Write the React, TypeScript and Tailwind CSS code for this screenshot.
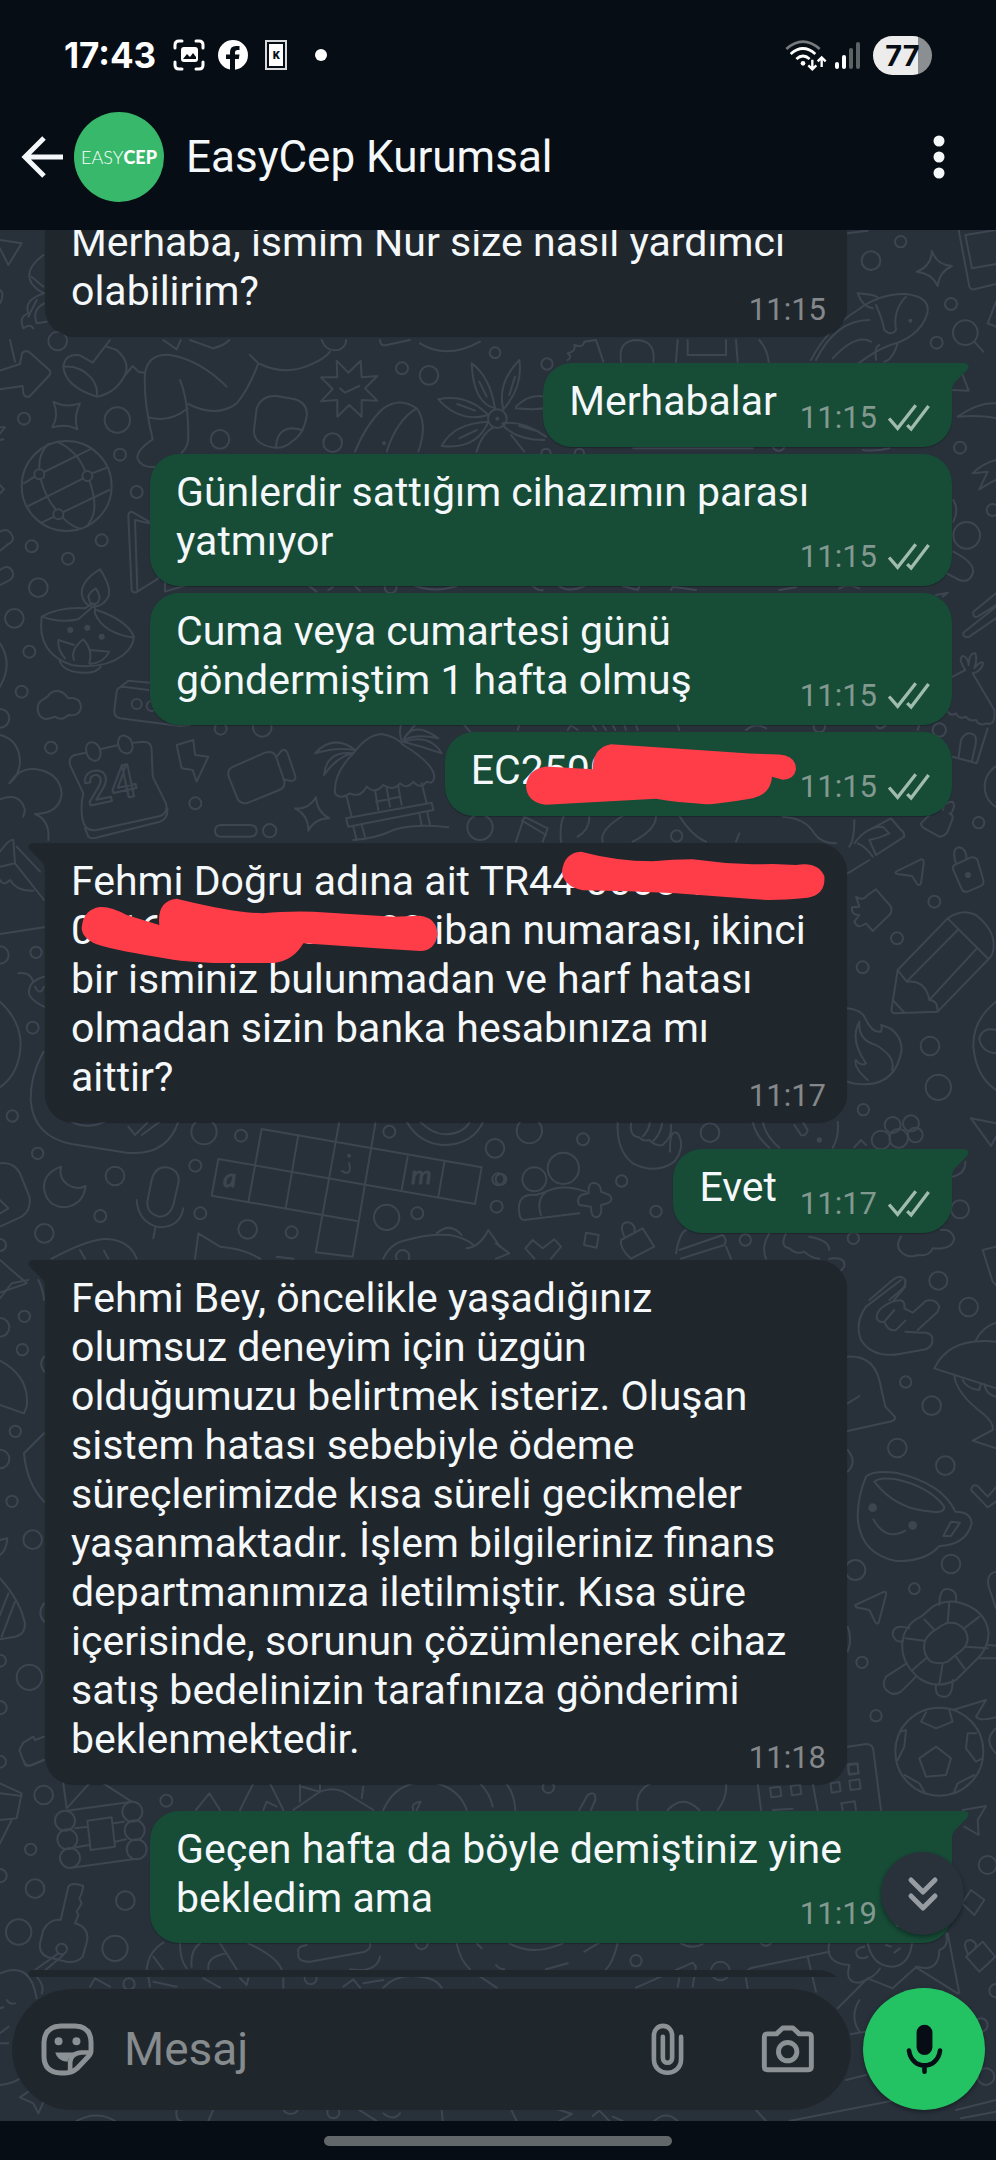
import { useState } from "react";
import type { ReactNode } from "react";
import clsx from "clsx";

interface Doodle {
  x: number;
  y: number;
  circles: number[][];
  dots?: number[][];
  paths: string[];
}

interface Message {
  id: number;
  own?: boolean;
  tail?: boolean;
  text: string;
  time: string;
  spacing?: string;
  overlay?: ReactNode;
}

// Each tile is drawn at three times its final size, x / y is where it lands on the wallpaper
const DOODLES: Doodle[] = [
  {
    x: 0,
    y: 0,
    circles: [[173, 1023, 28]],
    paths: [
      "M0 720 L65 730 L25 795 L0 745",
      "M130 765 Q70 810 95 850 Q110 870 132 880 M95 830 L130 860",
      "M132 880 Q70 900 85 940 Q55 950 70 985 Q90 970 100 985 M110 900 L85 950 M132 910 Q95 930 110 970 L140 965",
      "M0 870 Q15 880 0 910",
    ],
  },
  {
    x: 496,
    y: 0,
    circles: [[1214, 725, 17], [1125, 782, 28], [1365, 912, 18], [1322, 1028, 18], [1408, 998, 37]],
    dots: [[1243, 962, 6]],
    paths: [
      "M945 1080 Q990 990 1085 930 Q1150 880 1230 882 Q1300 890 1295 935 Q1280 1000 1200 1030 Q1120 1050 1010 1160 M1085 880 Q1100 920 1130 925 M1085 880 Q1150 885 1145 895 M1140 915 Q1160 960 1165 990 Q1185 1010 1200 990 Q1190 930 1230 890 M960 1080 Q1020 960 1120 960 M1010 1075 Q1080 1000 1125 1025 M1140 1080 Q1135 1040 1150 1035 M1205 1030 Q1190 1080 1165 1085",
      "M1308 753 Q1322 795 1368 798 Q1330 815 1325 858 Q1308 820 1262 815 Q1305 800 1308 753Z",
      "M1435 1025 L1462 1055 M1388 690 L1420 860 Q1425 870 1435 868 L1500 852 M1500 690 L1408 705 L1428 805 L1500 792",
      "M1500 905 L1475 970 L1500 980 M1055 700 L1115 692",
    ],
  },
  {
    x: 0,
    y: 340,
    circles: [
      [72, 236, 18], [352, 240, 38], [660, 298, 28], [360, 344, 18], [410, 456, 18], [95, 619, 18],
      [305, 601, 18], [204, 656, 18], [115, 743, 28], [43, 835, 28], [88, 935, 18], [65, 1055, 18],
      [0, 1135, 28], [153, 1223, 18], [998, 308, 28], [1206, 85, 18], [1287, 106, 28], [1485, 38, 16],
      [662, 1166, 18], [787, 1162, 28], [586, 1390, 18], [809, 1472, 20], [1440, 1462, 38], [1172, 742, 18],
      [200, 438, 135], [118, 403, 15], [262, 408, 15], [175, 523, 15], [1492, 236, 28], [410, 1092, 15], [455, 1098, 15],
    ],
    dots: [[211, 870, 9], [262, 863, 9], [305, 890, 9], [1152, 310, 6], [1492, 236, 6]],
    paths: [
      "M30 0 L45 65 M0 92 L60 72 L66 40 Q75 28 90 38 L148 90 Q155 98 146 108 L90 168 Q75 175 70 160 L68 138 L0 148",
      "M190 80 Q195 40 240 46 L278 68 L330 0 M190 80 Q195 140 290 170 Q345 160 372 110 Q395 70 350 30 L320 20 M190 80 Q240 75 275 115 Q295 140 290 170 M372 110 L398 78 L415 95 L432 98",
      "M458 298 Q430 180 435 100 Q445 40 510 45 Q600 60 680 140 M540 120 Q565 180 565 290 Q565 320 545 338 M445 232 Q510 250 563 205 M458 298 Q410 330 412 355 Q425 385 465 380 M565 192 Q650 235 710 190 Q745 150 775 70 L750 45 M780 72 Q860 110 940 70 Q975 55 990 35",
      "M490 0 L530 28 L542 0 M570 0 L640 25 Q675 15 688 0 M965 0 Q980 40 1020 28 Q1040 15 1038 0 M1140 0 Q1140 20 1160 15 L1230 0 M1260 10 Q1340 60 1440 5",
      "M160 185 Q195 205 240 190 Q220 230 232 268 Q200 250 157 262 Q178 225 160 185Z",
      "M0 262 L15 262 L0 280 M0 300 L10 298 M0 435 L12 448 L0 460",
      "M72 430 L104 410 M132 396 L270 328 M85 498 L250 415 M276 400 L318 384 M125 548 L162 530 M190 516 L328 450 M145 312 Q115 340 118 388 M122 418 Q140 480 168 509 M188 533 Q215 560 240 566 M170 305 Q230 330 256 394 M268 422 Q300 510 265 552",
      "M447 545 L395 515 Q385 515 385 530 L395 750 Q400 762 412 755 L475 715 M447 550 L405 540 L412 750 M495 720 L495 755 L560 735",
      "M0 575 Q25 560 38 590 Q42 605 25 612 L0 632 M0 690 Q25 670 38 695 Q45 715 20 725 L0 735 M0 910 Q40 970 0 1040",
      "M125 830 Q180 800 255 805 L278 790 M125 830 Q180 850 235 838 L278 800 M125 830 Q110 940 215 975 Q310 990 370 945 Q400 920 402 890 Q380 840 290 810 M402 893 Q310 880 285 820 L285 795 M245 760 Q245 720 300 688 Q335 740 325 770 Q310 800 278 800 Q250 795 245 760 M265 770 Q270 755 287 745 Q305 770 295 785 Q285 798 270 788Z",
      "M178 960 Q190 1000 260 998 Q290 998 302 980 M195 955 Q172 930 175 900 L222 915 M222 960 Q210 930 250 898 Q280 930 268 970 M270 930 L328 935 Q310 970 270 972",
      "M130 1078 Q145 1070 150 1060 Q180 1040 205 1075 Q240 1070 243 1100 Q240 1130 205 1125 Q185 1145 165 1130 Q120 1150 113 1110 Q112 1085 130 1078Z",
      "M445 1050 L370 1040 Q352 1040 350 1055 L343 1110 Q342 1132 360 1135 L540 1158 L570 1155 M352 1048 L385 1022 L450 1028",
      "M0 1185 Q60 1200 60 1270 Q55 1310 28 1330 Q60 1280 110 1288 Q180 1300 185 1360 Q180 1420 105 1422 Q150 1440 145 1500 M0 1378 Q60 1355 75 1410 L70 1430",
      "M250 1360 L210 1275 Q205 1250 225 1245 L258 1238 M300 1228 L352 1216 M400 1208 L430 1205 Q455 1205 455 1230 L458 1310 L498 1390 Q505 1420 480 1428 L290 1470 Q255 1475 248 1440 Q240 1400 250 1360 M255 1465 L265 1490 Q275 1500 300 1490 L480 1445 Q505 1435 502 1405",
      "M258 1230 Q258 1205 278 1207 Q300 1212 302 1240 Q300 1264 282 1262 Q262 1258 258 1230Z M354 1210 Q354 1185 374 1187 Q396 1192 398 1220 Q396 1242 378 1240 Q358 1238 354 1210Z",
      "M530 1215 L580 1200 L585 1245 L625 1250 L590 1325 L578 1290 L545 1285Z",
      "M700 1280 L795 1238 Q820 1230 828 1250 L852 1320 Q858 1342 838 1350 L745 1388 Q718 1395 710 1370 L686 1310 Q680 1288 700 1280Z M830 1250 L845 1232 Q855 1225 862 1238 L886 1308 Q888 1325 870 1322 L850 1318",
      "M1005 1360 Q1000 1300 1060 1240 Q1100 1185 1145 1182 Q1190 1190 1210 1215 Q1300 1270 1303 1310 Q1300 1335 1280 1325 Q1260 1350 1240 1325 Q1220 1350 1200 1330 Q1180 1355 1150 1335 Q1125 1365 1100 1340 Q1080 1375 1050 1360 Q1020 1380 1005 1360 M1040 1370 L1055 1430 M1125 1350 L1135 1410 M1160 1345 L1170 1400 M1195 1340 L1205 1395 M1265 1330 L1280 1390 M1128 1385 L1200 1370 M1038 1435 L1295 1388 L1300 1410 L1045 1460Z M1060 1460 L1070 1500 M1085 1455 L1095 1490 M1258 1420 L1265 1455 M1282 1418 L1290 1455 M1060 1500 Q1130 1495 1180 1470 Q1250 1450 1345 1462",
      "M1065 1230 Q1000 1180 945 1240 Q1010 1220 1065 1230 M1060 1240 Q980 1230 972 1305 Q1010 1250 1060 1240 M1205 1205 Q1195 1170 1205 1150 M1210 1200 Q1240 1140 1315 1195 Q1250 1180 1210 1200 M1210 1205 Q1290 1180 1325 1240 Q1270 1220 1210 1205 M1215 1190 L1245 1155 M1390 1152 L1410 1175",
      "M885 1405 Q925 1410 948 1372 Q950 1415 988 1435 Q945 1435 925 1472 Q925 1425 885 1405Z",
      "M662 1455 H752 Q770 1457 770 1472 Q770 1488 752 1490 H662 Q645 1488 645 1472 Q645 1457 662 1455Z",
      "M1010 62 L1045 98 L1082 62 L1085 112 L1132 108 L1095 145 L1132 182 L1085 180 L1085 230 L1048 195 L1012 230 L1012 180 L963 184 L998 147 L963 112 L1012 112Z M1020 145 L1035 158 L1078 138",
      "M770 205 Q785 165 830 168 L885 178 Q925 190 920 230 Q910 285 875 305 Q850 328 815 322 Q760 310 762 270Z M828 322 Q830 265 880 265 Q900 268 908 272",
      "M1065 335 Q1100 250 1150 205 Q1200 170 1250 205 Q1285 250 1255 335 M1160 335 Q1190 240 1250 205",
      "M1415 70 Q1470 110 1485 205 Q1420 190 1415 70Z M1438 125 L1460 170 M1315 178 Q1400 160 1465 225 Q1380 250 1315 178Z M1372 192 L1425 212 M1325 318 Q1360 250 1465 245 Q1430 330 1325 318Z M1378 295 L1430 270 M1430 335 Q1445 280 1480 262 M1558 60 Q1570 140 1510 208 Q1490 130 1558 60Z M1545 110 L1528 165",
      "M930 740 L950 755 M985 750 L998 742 M1065 738 L1080 752 M1240 735 Q1300 760 1370 738",
    ],
  },
  {
    x: 496,
    y: 340,
    circles: [
      [153, 72, 17], [1392, 323, 18], [1490, 510, 18], [1412, 586, 40], [1330, 1170, 20], [848, 315, 18],
      [150, 340, 14], [250, 340, 14], [970, 1160, 17], [1538, 1340, 72],
    ],
    paths: [
      "M215 60 Q230 50 215 40 Q240 35 235 15 Q260 25 265 5 L300 0 L322 65 M375 65 Q365 0 425 0 Q480 5 472 65 M540 65 L545 0 M720 0 L725 65 M575 0 L575 45 L690 45 L690 0 M790 0 Q815 30 818 65",
      "M60 200 Q100 160 145 170 M60 205 Q110 210 145 205 M20 250 Q80 240 150 290 M70 258 L120 272 M20 255 Q60 300 145 300 M45 285 L85 335",
      "M412 325 L770 325 M1100 330 Q1140 335 1180 325",
      "M1367 150 L1418 152 L1400 105 M1385 230 Q1450 185 1500 190 M1385 230 Q1460 225 1500 235",
      "M1430 400 Q1460 370 1500 360 M1430 400 L1475 395 L1450 448 Q1480 430 1500 420",
      "M1372 480 Q1390 510 1372 545 M1372 635 Q1440 670 1430 700 Q1420 730 1390 720 L1352 700",
      "M110 738 Q130 755 140 750 M185 735 Q215 760 265 738 M380 738 L425 750 L432 735 M525 750 L530 740 L600 750 M850 750 L900 742 M1030 745 Q1055 730 1090 745 M1340 770 L1355 758 L1320 765",
      "M1500 760 L1432 815 Q1430 835 1445 830 L1500 795 M1500 800 L1402 878 Q1400 895 1420 890 L1500 835",
      "M1370 1010 L1408 990 Q1385 955 1400 948 Q1415 950 1418 975 Q1420 935 1438 940 Q1445 960 1435 985 Q1455 960 1462 970 Q1455 995 1430 1000 L1495 1110 Q1500 1160 1470 1150 Q1450 1160 1440 1140 Q1420 1145 1410 1130 Q1390 1140 1380 1120 Q1365 1130 1355 1115",
      "M65 1170 L70 1155 M215 1170 L225 1155 L245 1170 M290 1155 L300 1170 M320 1155 L330 1170 M350 1155 L358 1170 M385 1155 L390 1170 M420 1155 L425 1170 M545 1155 L550 1170 M750 1170 Q780 1145 810 1165 M1140 1155 Q1150 1175 1170 1155 M1265 1170 L1270 1155",
      "M1475 1165 L1442 1270 L1370 1250 M1388 1250 L1395 1200 Q1410 1170 1435 1185 Q1445 1195 1435 1230 L1428 1262",
    ],
  },
  {
    x: 0,
    y: 800,
    circles: [
      [108, 457, 17], [0, 465, 26], [98, 683, 18], [37, 948, 17], [723, 1007, 18], [612, 995, 38], [113, 1060, 17],
      [586, 1097, 18], [345, 1128, 28], [301, 1248, 18], [601, 1240, 18], [133, 1300, 28], [743, 1288, 28],
      [875, 1297, 18], [0, 1335, 18], [1168, 995, 18], [1485, 1045, 28], [1160, 1252, 38], [1252, 1240, 18],
      [1208, 1370, 20], [1495, 1138, 18], [1490, 1220, 18],
    ],
    dots: [[1047, 1067, 6]],
    paths: [
      "M0 155 Q30 115 40 120 L45 190 L0 200 M45 190 L132 300 M50 140 L120 215 M0 240 Q10 260 30 240 Q50 275 100 272 M0 402 L132 382",
      "M55 520 Q90 515 100 545 M132 530 Q80 545 88 585 Q100 605 132 620 M105 560 Q120 590 132 560 M0 605 Q60 660 62 730 Q60 820 0 862",
      "M130 755 Q90 830 92 900 Q100 1010 215 1032 L380 1058 Q500 1070 535 965 M215 965 Q260 990 315 965 M385 980 L405 1005 L445 965 M425 1005 L480 965",
      "M183 1100 Q130 1120 132 1165 Q140 1220 195 1222 Q250 1215 257 1158 Q230 1172 205 1155 Q175 1135 183 1100Z",
      "M455 1140 Q465 1100 498 1102 Q538 1108 536 1145 L520 1215 Q508 1250 478 1250 Q440 1240 442 1205Z M410 1200 Q415 1270 480 1282 Q540 1280 550 1225 M466 1283 L460 1315",
      "M785 987 L1445 1102 M655 1077 L1425 1212 M635 1187 L1070 1263 M655 1077 L635 1187 M785 987 L745 1207 M895 1005 L857 1225 M1018 965 L947 1357 M1127 965 L1058 1370 M1223 1070 L1205 1170 M1333 1087 L1315 1190 M1445 1102 L1425 1212 M947 1357 L1058 1370",
      "M585 1376 L595 1300 L660 1340 Q730 1345 780 1376 M830 1370 L880 1376 M155 1376 Q280 1310 330 1318 Q390 1325 410 1376 M240 1350 L255 1376 M312 1352 L325 1376",
      "M0 1090 Q40 1085 60 1120 L88 1190 Q95 1230 65 1250 L0 1280 M0 1200 L25 1225 L0 1240 M0 1380 L80 1450 L0 1478",
      "M1400 1345 Q1440 1340 1465 1290 L1500 1340 M1150 1376 Q1170 1330 1220 1320 Q1290 1300 1350 1305 Q1400 1315 1420 1335 M1310 1300 Q1350 1265 1385 1305 M1220 965 Q1260 1035 1340 1035 Q1420 1030 1450 965 M1260 965 Q1300 1005 1340 1003 Q1390 1000 1410 965",
    ],
  },
  {
    x: 496,
    y: 800,
    circles: [
      [1448, 68, 17], [1315, 305, 18], [1203, 415, 18], [1100, 502, 18], [1302, 738, 28], [1327, 862, 38],
      [1102, 929, 17], [1392, 1228, 27], [1327, 1442, 27], [642, 998, 28], [261, 1018, 18], [100, 992, 38],
      [15, 1138, 16], [377, 1143, 17], [480, 1234, 17], [748, 1320, 17], [1072, 1315, 17], [542, 108, 17],
      [115, 1138, 36], [202, 1105, 47], [1190, 975, 24], [1245, 970, 24], [1155, 1020, 28], [1208, 1015, 28], [1258, 1005, 22],
    ],
    dots: [[1416, 225, 9], [970, 1020, 8]],
    paths: [
      "M60 125 L85 50 L155 85 L140 125 M78 62 L150 105 M195 125 Q190 70 205 45 M245 110 Q280 90 280 50 M320 125 Q310 90 380 48 M410 125 Q480 90 480 48 M550 48 Q590 110 630 125 M730 100 L720 125 M860 50 Q930 55 955 100 Q975 130 1020 130",
      "M1300 45 L1275 70 Q1275 80 1285 85 L1330 110 Q1345 110 1355 95 L1370 55 Q1372 45 1360 40 M1340 30 Q1345 5 1370 5 Q1380 20 1365 40",
      "M1055 220 L1120 180 M1060 140 Q1075 120 1075 60 M1075 130 Q1110 80 1160 80 L1180 100 Q1150 115 1120 120 L1140 165 L1225 110 Q1225 95 1215 90 L1185 55 L1120 90 M1085 130 Q1110 140 1130 170",
      "M1200 215 L1275 178 Q1285 178 1283 190 L1275 250 Q1270 260 1262 250 L1248 228 L1205 222 Q1195 220 1200 215Z",
      "M1375 195 L1425 172 Q1440 170 1445 182 L1462 240 Q1465 255 1450 260 L1415 275 Q1400 278 1395 262 L1372 210 Q1368 200 1375 195Z M1380 190 Q1365 145 1390 142 Q1410 145 1412 175",
      "M1080 290 Q1100 305 1115 285 L1140 268 L1185 320 Q1190 335 1180 345 L1130 393 L1110 370 Q1085 390 1075 365 L1090 345 Q1065 345 1068 322 L1090 320Z",
      "M1205 510 L1355 355 Q1400 325 1440 345 Q1490 385 1493 430 Q1495 460 1480 475 L1325 635 L1195 640 Q1185 640 1187 625Z M1355 355 L1475 475 M1385 390 L1232 545 M1440 448 L1300 600 M1205 510 L1232 545 Q1290 540 1300 600 Q1325 600 1325 635 M1190 600 L1225 638",
      "M1055 625 Q1100 630 1110 660 Q1130 700 1155 695 Q1160 680 1155 675 Q1215 690 1217 750 Q1200 850 1110 853 Q1070 853 1055 845 M1115 840 Q1070 800 1080 780 Q1095 800 1110 790 Q1060 720 1090 665 Q1085 720 1140 735 Q1200 770 1188 810",
      "M1500 605 Q1430 660 1432 740 Q1440 830 1500 870 M1500 690 Q1460 680 1450 715 Q1455 755 1500 760 M1500 970 L1425 955 L1485 1038 L1500 1010 M1075 1042 L1095 1020 L1110 1035",
      "M365 965 Q360 1050 410 1090 Q480 1125 535 1085 Q570 1040 545 1000 Q520 985 522 1055 M405 970 Q400 1010 430 1012 Q440 1025 460 1020 Q480 1040 500 1035 Q530 1010 525 975 M440 1010 Q460 990 462 965 M470 1025 Q495 1000 498 970",
      "M770 965 Q780 1010 820 1043 M800 965 Q810 1010 850 1043 M1025 965 Q1030 1010 1010 1043 M895 975 L915 1005 Q930 1010 935 990 L920 965",
      "M70 1240 Q60 1180 120 1185 Q140 1180 150 1175 Q200 1150 270 1175 M250 1240 L85 1260 Q72 1260 70 1240 M135 1245 Q120 1200 150 1175 M278 1165 Q280 1145 300 1150 Q315 1155 315 1175 L340 1185 Q355 1200 335 1210 L315 1215 Q320 1250 300 1252 Q285 1250 285 1220 L250 1215 Q240 1200 255 1185 L278 1180Z",
      "M115 1376 L88 1345 L110 1320 L140 1345 L175 1318 L195 1340 L165 1376 M270 1298 L308 1305 L302 1343 L264 1335Z M0 1330 L40 1360 L0 1376",
      "M375 1320 L440 1285 L475 1340 L405 1376 Q370 1345 375 1320 M385 1310 Q365 1265 400 1267 Q420 1275 415 1295 M540 1360 Q550 1300 570 1290 M550 1350 L680 1305 Q695 1320 685 1335 L555 1376 M690 1340 L705 1376",
      "M820 1300 Q795 1340 810 1376 M870 1300 Q850 1340 880 1345 Q900 1365 925 1355 Q945 1375 970 1376 M940 1310 Q1000 1320 1000 1350 M1000 1376 Q1050 1370 1045 1400 L1035 1412",
      "M1215 1310 Q1195 1340 1220 1360 Q1240 1375 1265 1365 Q1300 1370 1310 1345 Q1370 1350 1375 1315 Q1365 1285 1335 1290 M1500 1340 L1460 1350 L1490 1445 L1500 1455 M1370 1130 Q1410 1120 1408 1085",
      "M1120 1500 L1190 1440 Q1215 1420 1228 1440 Q1230 1460 1215 1470 L1180 1500",
    ],
  },
  {
    x: 0,
    y: 1280,
    circles: [
      [73, 109, 17], [0, 142, 28], [67, 209, 17], [46, 454, 17], [0, 537, 28], [36, 664, 17], [98, 779, 28],
      [0, 1142, 18], [88, 1192, 38], [0, 1283, 20], [0, 1445, 18],
    ],
    paths: [
      "M0 55 L35 10 L85 0 M115 0 Q130 30 132 60 M132 230 Q115 250 132 275 M0 242 Q90 290 80 380 L72 400 L0 375 M132 460 L72 520 Q80 610 132 665",
      "M0 780 L22 775 Q20 810 0 825 M0 895 Q60 960 75 1030 Q75 1065 45 1070 L0 1078 M25 940 L0 1005 M45 965 L5 1070 M132 970 Q110 1000 132 1025",
      "M132 1370 L105 1380 L100 1370 L70 1388 L58 1410 L75 1455 Q85 1460 95 1455 L132 1440",
    ],
  },
  {
    x: 496,
    y: 1280,
    circles: [
      [1418, 81, 28], [1229, 306, 17], [1307, 377, 28], [1204, 504, 28], [1348, 557, 28], [1365, 852, 28],
      [1078, 870, 30], [1255, 926, 16], [1098, 1147, 17], [1140, 1307, 17], [1330, 1415, 132],
    ],
    dots: [[1130, 683, 13], [1250, 736, 13]],
    paths: [
      "M1215 0 L1110 80 Q1075 130 1095 180 Q1130 235 1210 222 L1290 208 Q1315 195 1308 170 Q1300 155 1275 158 L1228 155 M1228 0 L1228 20 L1190 65 Q1230 50 1225 85 L1250 98 L1290 62 Q1320 55 1330 80 L1325 95 L1265 150 M1190 65 Q1140 85 1142 115 Q1150 130 1165 125 L1195 90 M1165 125 Q1175 155 1200 150 L1228 122",
      "M1440 180 Q1460 140 1500 128 M1500 185 Q1360 170 1315 265 L1500 325 M1375 285 Q1380 340 1460 400 Q1495 430 1490 450 L1430 482 L1500 505 M1400 300 Q1410 325 1450 330 L1455 310 M1465 312 Q1470 345 1500 350",
      "M1055 230 Q1130 225 1150 300 L1168 380 L1198 412 Q1195 425 1180 425 L1055 453 M1055 370 L1090 348 M1055 510 Q1085 545 1055 575",
      "M1110 590 Q1130 570 1200 578 Q1340 610 1378 695 Q1425 695 1427 730 Q1410 795 1330 798 Q1290 845 1200 843 Q1090 820 1085 710 Q1085 650 1110 590Z M1135 605 Q1150 590 1200 598 Q1300 620 1345 680 Q1345 700 1310 695 Q1200 690 1135 605Z M1365 725 L1392 728 L1365 768 L1342 768Z M1132 718 Q1170 785 1228 752",
      "M1500 622 L1475 650 L1445 618 Q1430 610 1425 630 L1475 682 L1500 665",
      "M1078 975 L1165 935 Q1172 935 1170 945 L1148 1028 Q1142 1035 1137 1025 L1120 990 L1080 982Z",
      "M1380 965 Q1470 985 1478 1060 Q1475 1110 1440 1140 L1380 1200 Q1320 1230 1270 1195 Q1210 1145 1220 1080 Q1230 1030 1275 1010 L1310 980 Q1340 962 1380 965Z M1380 1030 Q1415 1045 1415 1080 Q1410 1105 1385 1120 L1355 1145 Q1330 1155 1305 1145 Q1280 1125 1285 1090 Q1290 1070 1310 1055 L1340 1035 Q1355 1025 1380 1030Z",
      "M1360 965 L1355 1028 M1285 1018 L1315 1050 M1228 1075 L1285 1082 M1250 1170 L1290 1135 M1340 1150 L1330 1213 M1380 1130 L1405 1165 M1410 1100 L1475 1105 M1405 1045 L1450 1010",
      "M1330 975 Q1330 925 1355 927 Q1385 930 1380 965 M1240 1045 Q1190 1030 1190 1065 Q1200 1090 1222 1083 M1232 1150 L1170 1190 Q1150 1225 1190 1242 Q1205 1242 1215 1235 L1260 1190 M1320 1215 Q1315 1250 1345 1250 Q1370 1250 1370 1200 M1475 1095 L1500 1097 M1450 1135 L1500 1135 M1500 875 Q1470 880 1478 920 L1500 985 M1055 1040 Q1070 1080 1055 1115",
      "M1320 1400 L1365 1435 L1350 1485 L1290 1490 L1270 1435Z M1290 1297 L1275 1325 L1320 1345 L1370 1325 L1360 1290 M1215 1355 L1230 1350 L1225 1400 L1205 1440 M1440 1360 L1415 1360 L1410 1405 L1440 1445 L1460 1435 M1225 1485 L1270 1510 L1285 1535 M1375 1535 L1385 1510 L1435 1485",
      "M1370 1290 L1470 1260 L1440 1310 Q1450 1325 1500 1312 M1500 1345 Q1460 1380 1500 1420 M1055 1400 L1110 1392 Q1130 1392 1132 1410 L1155 1590 M1057 1452 L1085 1450 L1087 1480 L1058 1482Z",
    ],
  },
  {
    x: 0,
    y: 1760,
    circles: [
      [131, 105, 28], [499, 122, 18], [92, 268, 17], [0, 347, 20], [105, 386, 28], [376, 422, 28], [56, 516, 38],
      [345, 565, 38], [387, 672, 17], [932, 655, 18], [872, 1036, 26], [1000, 1057, 18], [1265, 550, 18],
      [195, 182, 30], [397, 155, 30], [202, 238, 30], [404, 211, 30], [210, 294, 30], [410, 268, 30], [185, 567, 16],
    ],
    paths: [
      "M0 70 L65 100 L50 175 L0 180 M0 100 L65 108 M35 180 L0 250 M70 0 Q75 20 95 15 L132 0",
      "M190 70 L200 145 L270 68 M200 152 L395 125 L310 70 M225 205 L262 200 M228 262 L268 255 M215 323 L410 296 M340 190 L372 185 M345 245 L378 238 M262 182 L335 172 L345 260 L272 270Z",
      "M205 380 Q215 365 250 378 L245 400 L238 415 L245 430 L230 455 L235 465 L225 490 Q265 500 262 540 L248 590 Q230 610 200 605 L145 592 Q115 580 120 550 L130 510 Q150 475 182 480Z M175 580 L105 630 M190 585 L130 635",
      "M588 150 L628 100 L660 150 M720 150 L760 70 M810 70 L850 150 M790 150 L800 125 L830 140 M900 70 L900 125 M960 75 L960 95 L905 80 M880 150 L960 95 Q1000 80 1030 95 L1120 150 M1090 80 L1085 115 M1150 150 Q1180 80 1250 68 M1310 70 Q1380 90 1400 150 M1440 70 Q1470 100 1478 140 M1240 150 Q1230 130 1262 125 L1250 150",
      "M440 630 Q445 575 490 548 M460 590 L490 630 M540 550 Q540 600 560 625 M575 620 Q570 570 600 550 M625 628 Q620 590 680 580 M660 550 L710 628 M745 550 Q830 590 845 628 M895 580 Q890 605 930 605 L1095 575 Q1115 565 1110 550 M895 575 Q890 560 920 555 M1050 628 Q1130 640 1140 590 M1370 550 Q1380 600 1410 628 M1430 550 L1445 565",
      "M270 680 L285 655 L330 680 M445 650 L450 680 M460 665 L530 680 M610 655 L660 683 M720 655 L740 675 L745 655 M850 655 L850 683 M1030 680 L1060 658 L1080 683 M1090 670 L1150 660 M1150 683 Q1190 640 1260 650 Q1310 655 1325 683 M1440 650 L1490 683",
      "M0 640 Q90 600 110 715 M110 650 Q135 680 125 700 M20 720 Q30 735 45 730 M0 745 L10 742 M0 975 Q40 970 60 955 M0 820 L25 800 M0 850 L25 850",
      "M85 995 L60 1012 L100 1030 L115 1060 L132 1022 M230 1083 Q290 1050 345 1083 M530 1048 Q525 1083 545 1083 M625 1083 L640 1048 M1075 1048 L1130 1083 M1150 1060 Q1180 1085 1200 1060 M1325 1048 L1328 1083",
    ],
  },
  {
    x: 496,
    y: 1760,
    circles: [
      [157, 82, 17], [1475, 315, 27], [1500, 692, 20], [420, 602, 17], [673, 633, 28], [1470, 950, 25], [1455, 795, 20],
    ],
    paths: [
      "M785 70 L795 150 M950 70 L965 150 M822 84 L852 80 L856 108 L826 112Z M884 78 L912 74 L916 102 L888 106Z M1004 70 L1030 66 L1034 94 L1007 98Z M1060 62 L1090 58 L1094 86 L1064 90Z M1056 16 L1084 12 L1088 40 L1060 44Z M1040 150 L1036 130 L1076 124 L1080 150 M830 150 L890 146",
      "M30 70 Q55 100 58 150 M250 150 L275 105 Q300 90 298 120 L285 150 M425 150 Q415 90 470 68 M515 150 Q560 100 610 150 M690 70 Q695 110 665 150",
      "M1400 150 L1470 138 L1445 180 L1448 225 L1405 200 M1425 390 L1465 420 L1435 465 L1398 430Z M1410 590 L1460 545 L1498 590 L1450 635Z M1415 580 Q1395 540 1425 540 Q1445 550 1438 560",
      "M1000 548 Q985 610 1060 615 Q1045 670 1090 668 Q1140 650 1152 625 M1350 520 Q1360 560 1330 570 Q1330 620 1290 625 L1260 620 M1105 560 Q1070 565 1085 590 Q1100 600 1115 590 M1115 550 Q1130 620 1190 620 Q1240 615 1248 550 M1170 555 L1185 560 M1195 578 L1212 565",
      "M1025 745 L1115 655 L1190 685 L1260 622 L1385 700 M1090 720 Q1060 770 1090 815 M1355 520 L1390 700 M750 640 Q755 625 775 622 L1000 575 M935 590 L960 695 M750 655 L755 685",
      "M0 615 Q10 628 25 628 M150 628 L215 610 M265 575 L310 548 M365 550 Q350 610 330 628 M40 550 Q110 590 200 550 M420 683 L590 608 L600 620 L590 680 M550 655 L545 680 M555 550 Q590 570 620 552 M795 550 Q810 565 825 550",
      "M1065 822 L1110 815 M1050 960 L1110 945 M780 1050 L810 1083 M880 1083 L1200 1020 M1395 1075 L1500 1055 M1380 1050 L1500 1020 M45 1048 L62 1083 M185 1048 L228 1062 L190 1083 M290 1068 L310 1052 L340 1083 M475 1083 Q510 1050 545 1083 M350 1070 L380 1083",
    ],
  },
];

const Wallpaper = () => (
  <svg
    className="pointer-events-none absolute inset-0 -z-10 h-full w-full"
    viewBox="0 230 996 1891"
    preserveAspectRatio="xMidYMin slice"
    fill="none"
    stroke="#3d4650"
    strokeWidth="6"
    strokeLinecap="round"
    strokeLinejoin="round"
    aria-hidden="true"
  >
    {DOODLES.map((tile) => (
      <g key={`${tile.x}-${tile.y}`} transform={`translate(${tile.x} ${tile.y}) scale(0.33333)`}>
        {tile.circles.map(([cx, cy, r], i) => (
          <circle key={i} cx={cx} cy={cy} r={r} />
        ))}
        {tile.dots?.map(([cx, cy, r], i) => (
          <circle key={i} cx={cx} cy={cy} r={r} fill="#3d4650" stroke="none" />
        ))}
        {tile.paths.map((d, i) => (
          <path key={i} d={d} />
        ))}
      </g>
    ))}
    <g strokeWidth="2" fontFamily="Roboto, sans-serif" fontWeight="500">
      <text x="88" y="806" fontSize="46" transform="rotate(-12 88 806)">24</text>
    </g>
    <g strokeWidth="1" fontFamily="Lato, sans-serif" fontStyle="italic" fontSize="26" fill="#3d4650">
      <text x="223" y="1187">a</text>
      <text x="411" y="1184">m</text>
    </g>
    <path strokeWidth="2" d="M349 1163 Q352 1173 346 1173 L342 1171" />
  </svg>
);

const Redaction = ({ d }: { d: string }) => <path d={d} fill="#ff3d49" />;

const OrderRedaction = () => (
  <svg
    className="pointer-events-none absolute top-3 right-[156px] h-[61px] w-[270px]"
    viewBox="90 1210 810 182"
    aria-hidden="true"
  >
    <Redaction d="M290 1285 Q290 1220 345 1210 L640 1230 L760 1238 L850 1241 Q900 1245 900 1285 Q895 1315 860 1317 L828 1308 Q825 1360 770 1372 Q660 1390 630 1390 Q540 1385 480 1374 L150 1392 Q92 1385 90 1335 Q95 1285 150 1277Z" />
  </svg>
);

const IbanRedaction = () => (
  <svg
    className="pointer-events-none absolute top-0 left-0 h-[279px] w-[802px]"
    viewBox="45 842 802 279"
    aria-hidden="true"
  >
    <g transform="translate(496 800) scale(0.33333)">
      <Redaction d="M198 210 Q205 155 255 152 Q360 180 470 181 Q530 175 590 175 Q680 188 770 190 L830 189 L900 192 Q965 180 985 225 Q990 280 935 290 Q830 300 780 295 L540 277 Q400 270 260 268 Q200 255 198 210Z" />
    </g>
    <g transform="translate(0 800) scale(0.33333)">
      <Redaction d="M245 380 Q250 325 300 318 Q330 315 380 342 L478 372 Q470 300 530 293 Q700 335 790 337 Q850 330 940 332 L1180 347 L1260 344 Q1310 350 1313 400 Q1305 450 1260 450 L1130 442 L910 427 Q880 480 820 486 L640 486 Q560 482 520 476 Q350 450 290 430 Q245 410 245 380Z" />
    </g>
  </svg>
);

const MESSAGES: Message[] = [
  { id: 1, text: "Merhaba, ismim Nur size nasıl yardımcı olabilirim?", time: "11:15" },
  { id: 2, own: true, tail: true, text: "Merhabalar", time: "11:15", spacing: "mt-[27px]" },
  { id: 3, own: true, text: "Günlerdir sattığım cihazımın parası yatmıyor", time: "11:15", spacing: "mt-[7px]" },
  { id: 4, own: true, text: "Cuma veya cumartesi günü göndermiştim 1 hafta olmuş", time: "11:15", spacing: "mt-[7px]" },
  { id: 5, own: true, text: "EC2500000000P", time: "11:15", spacing: "mt-[7px]", overlay: <OrderRedaction /> },
  {
    id: 6,
    tail: true,
    text: "Fehmi Doğru adına ait TR44 0000 0000 0016 0000 0000 00 iban numarası, ikinci bir isminiz bulunmadan ve harf hatası olmadan sizin banka hesabınıza mı aittir?",
    time: "11:17",
    spacing: "mt-[27px]",
    overlay: <IbanRedaction />,
  },
  { id: 7, own: true, tail: true, text: "Evet", time: "11:17", spacing: "mt-[27px]" },
  {
    id: 8,
    tail: true,
    text: "Fehmi Bey, öncelikle yaşadığınız olumsuz deneyim için üzgün olduğumuzu belirtmek isteriz. Oluşan sistem hatası sebebiyle ödeme süreçlerimizde kısa süreli gecikmeler yaşanmaktadır. İşlem bilgileriniz finans departmanımıza iletilmiştir. Kısa süre içerisinde, sorunun çözümlenerek cihaz satış bedelinizin tarafınıza gönderimi beklenmektedir.",
    time: "11:18",
    spacing: "mt-[27px]",
  },
  { id: 9, own: true, tail: true, text: "Geçen hafta da böyle demiştiniz yine bekledim ama", time: "11:19", spacing: "mt-[27px]" },
];

const Tail = ({ own }: { own?: boolean }) => (
  <svg
    className={clsx(
      "absolute top-0 h-[28px] w-[20px]",
      own ? "-right-[18px] text-[#174c37]" : "-left-[18px] -scale-x-100 text-[#20272c]"
    )}
    viewBox="0 0 20 28"
    fill="currentColor"
    aria-hidden="true"
  >
    <path d="M0 0 H15 Q21 2 17 7 L4 20 Q2 23 2 28 H0Z" />
  </svg>
);

const DoubleCheck = () => (
  <svg
    className="h-[28px] w-[43px]"
    viewBox="1170 186 130 85"
    fill="none"
    stroke="#a0bbaf"
    strokeWidth="10"
    role="img"
    aria-label="İletildi"
  >
    <path d="M1176 230 L1202 260 L1257 190 M1231 250 L1243 262 L1296 192" />
  </svg>
);

const Bubble = ({ own, tail, text, time, spacing, overlay }: Message) => (
  <li className={clsx("flex shrink-0", own ? "justify-end pr-[44px] pl-[150px]" : "pr-[149px] pl-[45px]", spacing)}>
    <div
      className={clsx(
        "relative grid min-h-[84px] rounded-[29px] shadow-[0_1px_1px_rgba(0,0,0,0.25)]",
        own ? "bg-[#174c37]" : "w-full bg-[#20272c]",
        tail && (own ? "rounded-tr-none" : "rounded-tl-none")
      )}
    >
      {tail && <Tail own={own} />}
      <p
        className={clsx(
          "col-start-1 row-start-1 pt-[14px] pb-[20px] pl-[26px] text-[41px] leading-[49px] text-[#f4f8fb]",
          own ? "pr-[28px]" : "pr-[35px]"
        )}
      >
        {text}
        {own && <span className="inline-block w-[147px]" />}
      </p>
      <div
        className={clsx(
          "col-start-1 row-start-1 flex items-center gap-[10px] self-end justify-self-end text-[31px] leading-[36px]",
          own ? "pr-[22px] pb-[11px] text-[#82998f]" : "pr-[21px] pb-[8px] text-[#84888b]"
        )}
      >
        <time>{time}</time>
        {own && <DoubleCheck />}
      </div>
      {overlay}
    </div>
  </li>
);

const StatusBar = () => (
  <div className="flex h-[84px] items-center pt-[26px] pr-[64px] pl-[64px] text-white">
    <span className="font-[Inter,sans-serif] text-[35px] leading-[40px] font-bold">17:43</span>
    <svg className="ml-[17px] h-[32px] w-[32px]" viewBox="0 0 32 32" fill="none" stroke="white" strokeWidth="3" aria-hidden="true">
      <path strokeLinecap="round" d="M2 9 V6 Q2 2 6 2 H9 M23 2 H26 Q30 2 30 6 V9 M30 23 V26 Q30 30 26 30 H23 M9 30 H6 Q2 30 2 26 V23" />
      <rect x="8" y="8" width="17" height="15" rx="3" fill="white" stroke="none" />
      <path d="M10 20 L14 15 L17 18 L20 14 L23 18 V20Z" fill="#070d14" stroke="none" />
    </svg>
    <svg className="ml-[13px] h-[30px] w-[30px]" viewBox="0 0 30 30" aria-hidden="true">
      <circle cx="15" cy="15" r="15" fill="white" />
      <path d="M12 30 V19 H8 V14.500 H12 V12 Q12 6 18 6 H21.500 V10 H19.500 Q17 10 17 12.500 V14.500 H21.500 L20.800 19 H17 V30Z" fill="#070d14" />
    </svg>
    <span className="ml-[17px] flex h-[30px] w-[22px] border-2 border-[#d8dadc] p-[2px]">
      <span className="flex flex-1 items-center justify-center bg-white text-[11px] leading-none font-black text-[#070d14]">K</span>
    </span>
    <span className="ml-[28px] h-[12px] w-[12px] rounded-full bg-white" />

    <svg className="ml-auto h-[32px] w-[42px]" viewBox="0 0 126 96" fill="none" stroke="white" strokeWidth="8" aria-hidden="true">
      <path d="M4 30 Q54 -14 104 30" stroke="#75797d" />
      <path d="M17 45 Q54 12 91 45 M34 60 Q54 42 74 60" />
      <circle cx="54" cy="73" r="7" fill="white" stroke="none" />
      <path strokeWidth="7" d="M82 62 V90 M70 79 L82 91 L94 79 M110 84 V56 M98 67 L110 55 L122 67" />
    </svg>
    <svg className="ml-[7px] h-[28px] w-[27px]" viewBox="0 0 27 28" strokeWidth="4" strokeLinecap="round" stroke="white" aria-hidden="true">
      <path d="M3 23 V26 M10 16 V26" />
      <path d="M17 9 V26 M24 3 V26" stroke="#5d6265" />
    </svg>
    <span className="ml-[12px] flex h-[39px] w-[59px] items-center justify-center rounded-full bg-linear-to-r from-[#ececec] from-77% to-[#8b8f91] to-77% font-[Inter,sans-serif] text-[29px] leading-none font-bold text-[#070d14]">
      77
    </span>
  </div>
);

const ChatHeader = () => (
  <div className="flex h-[146px] items-center pr-[40px] pl-[20px]">
    <button type="button" aria-label="Geri" className="flex h-[60px] w-[46px] items-center">
      <svg className="h-[42px] w-[44px]" viewBox="0 0 44 42" fill="none" stroke="#f4f8fb" strokeWidth="5" aria-hidden="true">
        <path d="M24 2 L5 21 L24 40 M5 21 H43" />
      </svg>
    </button>
    <div className="ml-2 flex h-[90px] w-[90px] items-center justify-center rounded-full bg-[#38b86a] font-[Lato,sans-serif] text-[18px] leading-none text-white">
      <span className="font-light">EASY</span>
      <span className="font-black">CEP</span>
    </div>
    <h1 className="ml-[22px] text-[44px] leading-[52px] text-[#f4f8fb]">EasyCep Kurumsal</h1>
    <button type="button" aria-label="Diğer seçenekler" className="ml-auto flex h-[60px] w-[34px] items-center justify-center">
      <svg className="h-[44px] w-[12px]" viewBox="0 0 12 44" fill="#f4f8fb" aria-hidden="true">
        <circle cx="6" cy="6" r="5.500" />
        <circle cx="6" cy="22" r="5.500" />
        <circle cx="6" cy="38" r="5.500" />
      </svg>
    </button>
  </div>
);

const Composer = () => {
  const [message, setMessage] = useState("");

  return (
    <form className="flex items-center gap-3 py-[11px] pr-[11px] pl-[12px]" onSubmit={(e) => e.preventDefault()}>
      <div className="flex h-[121px] min-w-0 flex-1 items-center rounded-full bg-[#20272c] pr-[36px] pl-[29px] text-[#8b9194]">
        <button type="button" aria-label="Çıkartmalar" className="shrink-0">
          <svg className="h-[53px] w-[53px]" viewBox="122 788 160 158" fill="none" stroke="currentColor" strokeWidth="15" strokeLinejoin="round" aria-hidden="true">
            <path d="M182 796 H225 Q273 798 273 846 V870 Q273 880 265 888 L230 925 Q215 938 195 938 H182 Q131 935 131 887 V846 Q133 798 182 796Z" />
            <path d="M210 934 V905 Q212 878 245 876 H268" strokeWidth="14" />
            <circle cx="175" cy="842" r="12" fill="currentColor" stroke="none" />
            <circle cx="229" cy="842" r="12" fill="currentColor" stroke="none" />
            <path d="M165 876 H226 Q205 885 202 904 Q172 902 165 876Z" fill="currentColor" stroke="none" />
          </svg>
        </button>
        <input
          type="text"
          aria-label="Mesaj"
          placeholder="Mesaj"
          value={message}
          onChange={(e) => setMessage(e.target.value)}
          className="ml-[30px] min-w-0 flex-1 bg-transparent text-[46px] leading-[56px] text-[#f4f8fb] outline-none placeholder:text-[#868b8e]"
        />
        <button type="button" aria-label="Ekle" className="shrink-0">
          <svg className="h-[53px] w-[35px]" viewBox="464 784 104 160" fill="none" stroke="currentColor" strokeWidth="14" strokeLinecap="round" aria-hidden="true">
            <path d="M557 826 V893 C557 948 475 948 475 893 V822 C475 783 530 783 530 822 V889 C530 909 502 909 502 889 V826" />
          </svg>
        </button>
        <button type="button" aria-label="Kamera" className="ml-[76px] shrink-0">
          <svg className="h-[48px] w-[54px]" viewBox="797 795 162 146" fill="none" stroke="currentColor" strokeWidth="15" strokeLinejoin="round" aria-hidden="true">
            <path d="M815 822 H843 L862 804 H893 L912 822 H940 Q949 822 949 832 V922 Q949 931 940 931 H815 Q806 931 806 922 V832 Q806 822 815 822Z" />
            <circle cx="877" cy="876" r="28" />
          </svg>
        </button>
      </div>
      <button
        type="button"
        aria-label="Sesli mesaj"
        className="flex h-[122px] w-[122px] shrink-0 items-center justify-center rounded-full bg-[#23c364] text-[#070d14] shadow-[0_2px_4px_rgba(0,0,0,0.35)]"
      >
        <svg className="h-[51px] w-[37px]" viewBox="1228 790 112 154" fill="none" stroke="currentColor" strokeWidth="14" strokeLinecap="round" aria-hidden="true">
          <rect x="1260" y="792" width="48" height="92" rx="24" fill="currentColor" stroke="none" />
          <path d="M1237 870 C1245 930 1323 930 1331 870 M1284 916 V934" />
        </svg>
      </button>
    </form>
  );
};

export default function App() {
  return (
    <div className="flex h-screen flex-col overflow-hidden bg-[#070d14] font-[Roboto,sans-serif]">
      <header className="shrink-0">
        <StatusBar />
        <ChatHeader />
      </header>

      <main className="relative isolate flex min-h-0 flex-1 flex-col bg-[#28303a]">
        <Wallpaper />

        <section className="relative flex min-h-0 flex-1 flex-col justify-end overflow-hidden">
          <ul className="flex flex-col">
            {MESSAGES.map((message) => (
              <Bubble key={message.id} {...message} />
            ))}
          </ul>
          {/* top edge of the next unread message */}
          <div className="mt-[27px] h-[7px] shrink-0 overflow-hidden pr-[149px] pl-[45px]">
            <div className="relative h-[84px] rounded-[29px] rounded-tl-none bg-[#20272c]">
              <Tail />
            </div>
          </div>
          <button
            type="button"
            aria-label="En alta git"
            className="absolute right-[32px] bottom-[42px] flex h-[83px] w-[83px] items-center justify-center rounded-full bg-[#29323b] shadow-[0_2px_4px_rgba(0,0,0,0.4)]"
          >
            <svg className="h-[36px] w-[32px]" viewBox="0 0 32 36" fill="none" stroke="#969ca1" strokeWidth="5" strokeLinecap="round" strokeLinejoin="round" aria-hidden="true">
              <path d="M4 4 L16 16 L28 4 M4 20 L16 32 L28 20" />
            </svg>
          </button>
        </section>

        <Composer />
      </main>

      <div className="flex h-[39px] shrink-0 justify-center pt-[15px]">
        <div className="h-[10px] w-[35%] rounded-full bg-[#626769]" />
      </div>
    </div>
  );
}
